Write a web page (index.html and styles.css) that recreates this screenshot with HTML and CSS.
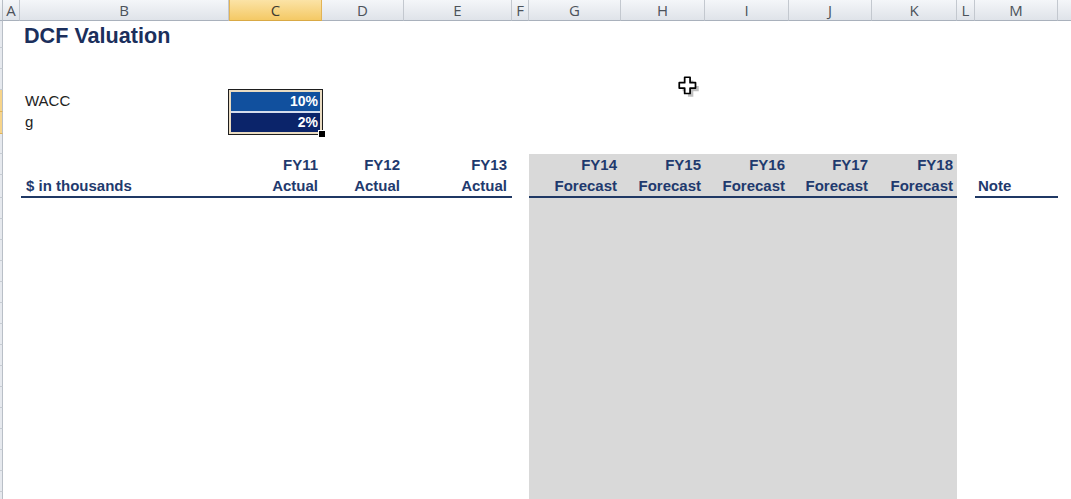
FILE: index.html
```html
<!DOCTYPE html>
<html>
<head>
<meta charset="utf-8">
<link rel="stylesheet" href="styles.css">
</head>
<body>
<div class="sheet">
  <div class="ch corner"></div>
  <div class="ch">A</div>
  <div class="ch">B</div>
  <div class="ch sel">C</div>
  <div class="ch">D</div>
  <div class="ch">E</div>
  <div class="ch">F</div>
  <div class="ch">G</div>
  <div class="ch">H</div>
  <div class="ch">I</div>
  <div class="ch">J</div>
  <div class="ch">K</div>
  <div class="ch">L</div>
  <div class="ch">M</div>
  <div class="ch last"></div>

  <div class="rh r2"></div>
  <div class="rh r3"></div>
  <div class="rh r4"></div>
  <div class="rh rsel r5"></div>
  <div class="rh rsel r6"></div>
  <div class="rh r7"></div>
  <div class="rh r8"></div>
  <div class="rh r9"></div>
  <div class="rh r10"></div>
  <div class="rh r11"></div>
  <div class="rh r12"></div>
  <div class="rh r13"></div>
  <div class="rh r14"></div>
  <div class="rh r15"></div>
  <div class="rh r16"></div>
  <div class="rh r17"></div>
  <div class="rh r18"></div>
  <div class="rh r19"></div>
  <div class="rh r20"></div>
  <div class="rh r21"></div>
  <div class="rh r22"></div>
  <div class="rh r23"></div>
  <div class="rh r24"></div>

  <div class="forecast-shade"></div>

  <div class="title">DCF Valuation</div>

  <div class="label wacc">WACC</div>
  <div class="label grow">g</div>

  <div class="inputs">
    <div class="in in-wacc">10%</div>
    <div class="in in-g">2%</div>
    <span class="handle"></span>
  </div>

  <div class="hd top c-c">FY11</div>
  <div class="hd top c-d">FY12</div>
  <div class="hd top c-e">FY13</div>
  <div class="hd top c-g">FY14</div>
  <div class="hd top c-h">FY15</div>
  <div class="hd top c-i">FY16</div>
  <div class="hd top c-j">FY17</div>
  <div class="hd top c-k">FY18</div>

  <div class="hd bot left c-b">$ in thousands</div>
  <div class="hd bot c-c">Actual</div>
  <div class="hd bot c-d">Actual</div>
  <div class="hd bot c-e">Actual</div>
  <div class="hd bot c-g">Forecast</div>
  <div class="hd bot c-h">Forecast</div>
  <div class="hd bot c-i">Forecast</div>
  <div class="hd bot c-j">Forecast</div>
  <div class="hd bot c-k">Forecast</div>
  <div class="hd bot left c-m">Note</div>
</div>

<svg class="cursor" width="26" height="26" viewBox="0 0 24 24">
  <path d="M9 4h5v5h5v5h-5v5H9v-5H4V9h5z" fill="#000" opacity="0.25" transform="translate(2,2)"/>
  <path d="M8 3h5v5h5v5h-5v5H8v-5H3V8h5z" fill="#fff" stroke="#000" stroke-width="1.6" stroke-linejoin="round"/>
</svg>
</body>
</html>
```

FILE: styles.css
```css
html, body {
  margin: 0;
  padding: 0;
  background: #ffffff;
  overflow: hidden;
}

body {
  position: relative;
  width: 1071px;
  height: 499px;
  font-family: "Liberation Sans", Arial, sans-serif;
}

.sheet {
  display: grid;
  grid-template-columns: 3px 17px 209px 93px 82px 108px 17px 92px 84px 84px 83px 85px 18px 83px 13px;
  grid-template-rows: 21px 27px 21px 21px 22px 22px 20px 21px 23px repeat(15, 21px);
  width: 1071px;
}

/* column headers */
.ch {
  grid-row: 1;
  box-sizing: border-box;
  background: linear-gradient(#f4f6f9, #dfe3e9);
  border-right: 1px solid #c3c8cf;
  border-bottom: 1px solid #a9b1bc;
  font-family: "Open Sans", "Liberation Sans", sans-serif;
  font-size: 15px;
  line-height: 20px;
  color: #4c525a;
  text-align: center;
}
.ch.corner {
  border-right: 1px solid #b8bec6;
}
.ch.last {
  border-right: none;
}
.ch.sel {
  background: linear-gradient(#fbe3a6, #f4c965);
  border-right: 1px solid #e2b355;
  border-left: 1px solid #e2b355;
  border-bottom: 1px solid #d9a945;
  color: #3e3a30;
}

/* row header strip */
.rh {
  grid-column: 1;
  box-sizing: border-box;
  background: #e6e9ee;
  border-right: 1px solid #b9bfc7;
  border-bottom: 1px solid #c7ccd3;
}
.rh.rsel {
  background: #f7d48a;
  border-bottom: 1px solid #e0b45a;
}
.r2 { grid-row: 2; }
.r3 { grid-row: 3; }
.r4 { grid-row: 4; }
.r5 { grid-row: 5; }
.r6 { grid-row: 6; }
.r7 { grid-row: 7; }
.r8 { grid-row: 8; }
.r9 { grid-row: 9; }
.r10 { grid-row: 10; }
.r11 { grid-row: 11; }
.r12 { grid-row: 12; }
.r13 { grid-row: 13; }
.r14 { grid-row: 14; }
.r15 { grid-row: 15; }
.r16 { grid-row: 16; }
.r17 { grid-row: 17; }
.r18 { grid-row: 18; }
.r19 { grid-row: 19; }
.r20 { grid-row: 20; }
.r21 { grid-row: 21; }
.r22 { grid-row: 22; }
.r23 { grid-row: 23; }
.r24 { grid-row: 24; }

/* shaded forecast block */
.forecast-shade {
  grid-column: 8 / 13;
  grid-row: 8 / 25;
  background: #d9d9d9;
}

.title {
  grid-column: 3 / 8;
  grid-row: 2;
  padding: 3px 0 0 4px;
  font-size: 21.6px;
  line-height: 24px;
  font-weight: bold;
  color: #1b2f5c;
  white-space: nowrap;
}

.label {
  grid-column: 3;
  padding-left: 5px;
  font-size: 15px;
  line-height: 22px;
  color: #222;
}
.wacc { grid-row: 5; }
.grow { grid-row: 6; line-height: 20px; }

.inputs {
  grid-column: 4;
  grid-row: 5 / 7;
  margin: -1px -1px -1px -1px;
  position: relative;
  display: flex;
  flex-direction: column;
  gap: 2px;
  border: 1px solid #1e1e1e;
  padding: 2px;
  background: #eadcc2;
}
.in {
  height: 19px;
  box-sizing: border-box;
  padding-right: 2px;
  text-align: right;
  font-size: 14px;
  line-height: 19px;
  font-weight: bold;
  color: #ffffff;
}
.in-wacc {
  background: #11509e;
  box-shadow: 0 2px 0 #d3dced;
}
.in-g {
  background: #0b246a;
}
.handle {
  position: absolute;
  right: -4px;
  bottom: -4px;
  width: 6px;
  height: 6px;
  background: #000;
  border: 1px solid #fff;
}

/* table header */
.hd {
  font-size: 15px;
  font-weight: bold;
  color: #1f3a6e;
  text-align: right;
  padding-right: 4px;
  white-space: nowrap;
  position: relative;
}
.hd.top {
  grid-row: 8;
  line-height: 21px;
}
.hd.bot {
  grid-row: 9;
  line-height: 21px;
  border-bottom: 2px solid #1f3864;
}
.hd.left {
  text-align: left;
  padding-right: 0;
}
.c-b { grid-column: 3; padding-left: 5px; margin-left: 1px; }
.c-c { grid-column: 4; }
.c-d { grid-column: 5; }
.c-e { grid-column: 6; padding-right: 5px; }
.c-g { grid-column: 8; }
.c-h { grid-column: 9; }
.c-i { grid-column: 10; }
.c-j { grid-column: 11; }
.c-k { grid-column: 12; }
.c-m { grid-column: 14; padding-left: 3px; }

.cursor {
  position: absolute;
  left: 676px;
  top: 74px;
}
```
